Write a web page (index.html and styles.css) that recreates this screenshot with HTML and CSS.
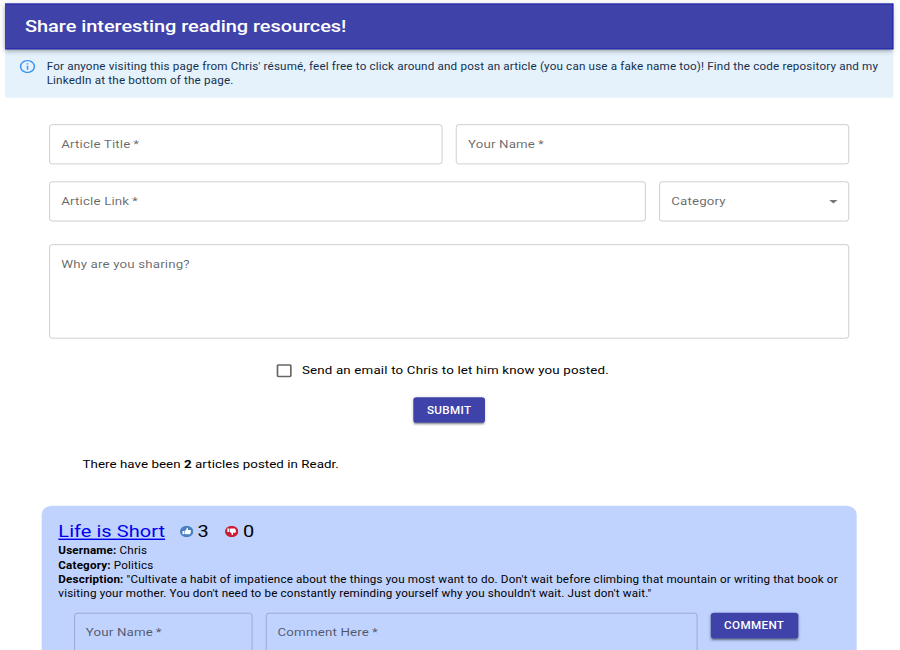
FILE: index.html
```html
<!DOCTYPE html>
<html lang="en">
<head>
<meta charset="utf-8">
<title>Readr</title>
<link rel="stylesheet" href="styles.css">
</head>
<body>
<div class="page">
  <header class="app-bar"><h1>Share interesting reading resources!</h1></header>
  <div class="alert">
    <svg class="alert-icon" viewBox="0 0 24 24"><path d="M11 7h2v2h-2zm0 4h2v6h-2zm1-9C6.48 2 2 6.48 2 12s4.480 10 10 10 10-4.480 10-10S17.520 2 12 2zm0 18c-4.410 0-8-3.590-8-8s3.590-8 8-8 8 3.590 8 8-3.590 8-8 8z"/></svg>
    <p>For anyone visiting this page from Chris' résumé, feel free to click around and post an article (you can use a fake name too)! Find the code repository and my LinkedIn at the bottom of the page.</p>
  </div>
  <form class="share-form">
    <div class="row row-half">
      <div class="field">Article Title<span>&#8201;*</span></div>
      <div class="field">Your Name<span>&#8201;*</span></div>
    </div>
    <div class="row row-link">
      <div class="field">Article Link<span>&#8201;*</span></div>
      <div class="field select">Category
        <svg viewBox="0 0 24 24"><path d="M7 10l5 5 5-5z"/></svg>
      </div>
    </div>
    <div class="field area">Why are you sharing?</div>
    <label class="notify"><svg viewBox="0 0 24 24"><path d="M19 5v14H5V5h14m0-2H5c-1.100 0-2 .9-2 2v14c0 1.100.9 2 2 2h14c1.100 0 2-.9 2-2V5c0-1.100-.9-2-2-2z"/></svg>Send an email to Chris to let him know you posted.</label>
    <button type="button" class="button submit">SUBMIT</button>
  </form>
  <p class="count">There have been <b>2</b> articles posted in Readr.</p>
  <article class="card">
    <div class="card-head">
      <a href="#">Life is Short</a>
      <svg class="vote up" viewBox="0 0 16 16"><circle cx="8" cy="8" r="8" fill="#4a7fc1"/><path fill="#fff" d="M3 7.300h2.200v4.700H3zM5.800 7.300l2-2.200.3-2.300c1.500-.2 1.900 1.200 1.300 3.200h2.700c1.100 0 1.300 1 .8 1.700.5.600.3 1.300-.2 1.600.3.700 0 1.200-.4 1.500.1.800-.4 1.200-1.300 1.200H7.500L5.800 11.500z"/></svg>
      <span class="votes">3</span>
      <svg class="vote down" viewBox="0 0 16 16"><circle cx="8" cy="8" r="8" fill="#c81e37"/><path fill="#fff" d="M2.800 4h2.300v4.700H2.800zM5.800 4.300l1.700-.5H11c.9 0 1.400.4 1.300 1.200.4.300.7.800.4 1.500.5.300.7 1 .2 1.600.5.700.3 1.700-.8 1.700H9.400c.6 2 .2 3.400-1.300 3.200l-.3-2.300-2-2.200z"/></svg>
      <span class="votes">0</span>
    </div>
    <div class="details">
      <p><b>Username:</b> Chris</p>
      <p><b>Category:</b> Politics</p>
      <p><b>Description:</b> "Cultivate a habit of impatience about the things you most want to do. Don't wait before climbing that mountain or writing that book or visiting your mother. You don't need to be constantly reminding yourself why you shouldn't wait. Just don't wait."</p>
    </div>
    <form class="comment-form">
      <div class="field">Your Name<span>&#8201;*</span></div>
      <div class="field">Comment Here<span>&#8201;*</span></div>
      <button type="button" class="button">COMMENT</button>
    </form>
  </article>
</div>
</body>
</html>
```
FILE: styles.css
```css
* { box-sizing: border-box; }

html, body { margin: 0; overflow: hidden; background: #fff; }
body { height: 650px; }
h1, p { margin: 0; }

.page {
  display: flex;
  flex-direction: column;
  width: 1080px;
  height: 910px;
  margin: 0 -180px -260px 0;
  padding: 5px 8px 0 6px;
  overflow: hidden;
  transform: scale(0.83333, 0.714286);
  transform-origin: 0 0;
  font: 16px/24px Roboto, "Liberation Sans", sans-serif;
  letter-spacing: 0.17px;
  color: #000;
}

.app-bar {
  position: relative;
  display: flex;
  flex: none;
  align-items: center;
  height: 64px;
  padding: 0 23px;
  background: #3f43a9;
  border: 1px solid #1414ae;
  border-left-color: #3f43a9;
  color: #fff;
  box-shadow: 0 2px 4px -1px rgba(0,0,0,.2), 0 4px 5px rgba(0,0,0,.14), 0 1px 10px rgba(0,0,0,.12);
}
.app-bar h1 { font-size: 24px; line-height: 32px; font-weight: 500; letter-spacing: -.07px; }

.alert {
  display: flex;
  flex: none;
  gap: 12px;
  height: 68px;
  padding: 6px 16px;
  border-radius: 4px;
  background: #e5f2fc;
  color: #14304f;
  font-size: 14px;
  line-height: 20px;
  letter-spacing: .195px;
}
.alert p { padding: 8px 0; }
.alert-icon { flex: none; width: 22px; height: 22px; margin-top: 7px; fill: #3b93f5; }

.share-form {
  display: flex;
  flex-direction: column;
  flex: none;
  padding: 37px 53px 0;
}
.row { display: grid; gap: 16px; margin-bottom: 24px; }
.row-half { grid-template-columns: 1fr 1fr; }
.row-link { grid-template-columns: 1fr 228px; margin-bottom: 32px; }

.field {
  height: 56px;
  padding: 15px 13.500px;
  border: 1px solid rgba(0,0,0,.25);
  border-radius: 4px;
  color: rgba(0,0,0,.6);
}
.area { height: 132px; }
.select { display: flex; justify-content: space-between; padding-right: 6px; }
.select svg { width: 24px; height: 24px; fill: rgba(0,0,0,.54); }

.notify { display: flex; align-items: center; align-self: center; gap: 9px; height: 24px; margin: 33px 18px 25px 0; letter-spacing: .2px; }
.notify svg { width: 24px; height: 24px; fill: rgba(0,0,0,.6); }

.button {
  height: 36px;
  padding: 0 16px;
  border: 0;
  border-radius: 4px;
  background: #3f43a9;
  color: #fff;
  font: 500 14px/24px Roboto, "Liberation Sans", sans-serif;
  letter-spacing: .4px;
  box-shadow: 0 3px 1px -2px rgba(0,0,0,.2), 0 2px 2px rgba(0,0,0,.14), 0 1px 5px rgba(0,0,0,.12);
}
.submit { align-self: center; }

.count { flex: none; margin: 46px 0 0 93px; letter-spacing: .06px; }

.card {
  flex: 1;
  min-height: 0;
  margin: 46px 44px 0;
  padding: 20px 20px 0;
  border-radius: 12px 12px 0 0;
  background: #c0d3fe;
}
.card-head { display: flex; align-items: center; height: 32.500px; font-size: 24px; line-height: 32px; letter-spacing: .05px; }
.card-head a { color: #00e; }
.vote { width: 16px; height: 16px; }
.up { margin-left: 18px; margin-right: 5px; }
.down { margin-left: 19px; margin-right: 6px; }
.details { font-size: 14px; line-height: 20px; letter-spacing: .19px; }

.comment-form { display: grid; grid-template-columns: 214px 518px 105px; gap: 16px; padding: 17.500px 0 0 18.500px; }
```
